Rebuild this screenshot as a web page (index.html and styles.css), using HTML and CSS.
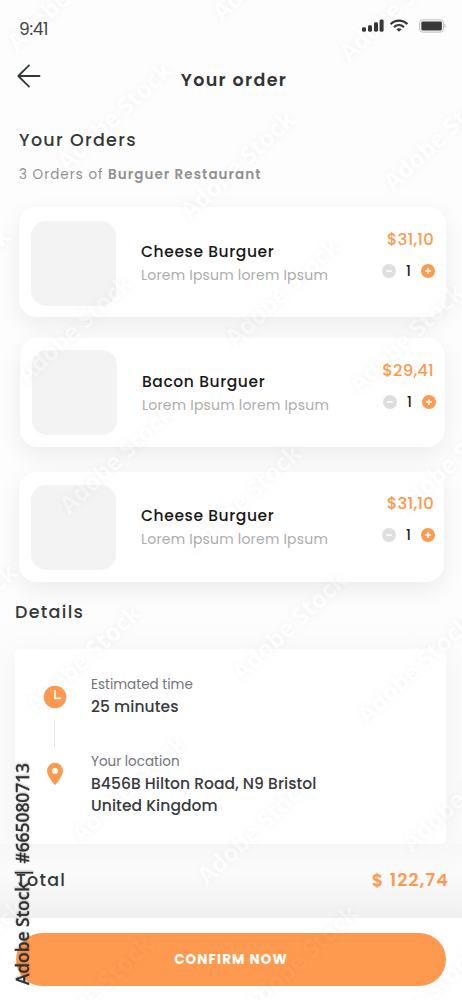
FILE: index.html
```html
<!DOCTYPE html>
<html lang="en">
<head>
<meta charset="utf-8">
<title>Your order</title>
<link rel="stylesheet" href="styles.css">
</head>
<body>
<main class="screen">
  <div class="status">
    <span class="clock">9:41</span>
    <div class="status-icons">
      <svg class="signal" width="22" height="13" viewBox="0 0 22 13"><rect x="0" y="8.3" width="4" height="4.4" rx="1.4"/><rect x="6" y="6.2" width="4" height="6.5" rx="1.4"/><rect x="12" y="3.2" width="4" height="9.5" rx="1.4"/><rect x="17.6" y="0.6" width="4" height="12.1" rx="1.4"/></svg>
      <svg class="wifi" width="20" height="13" viewBox="0 0 20 13"><path d="M1.6 5.1C6.4.4 13.6.4 18.4 5.1M5 8.2c2.9-2.7 7.1-2.7 10 0" fill="none" stroke="#383838" stroke-width="2.2"/><path d="M7.4 10.2c1.5-1.2 3.7-1.2 5.2 0L10 12.8z" fill="#383838"/></svg>
      <svg class="battery" width="28" height="14" viewBox="0 0 28 14"><rect x=".7" y=".9" width="23.8" height="12.2" rx="3" fill="none" stroke="#bbb"/><rect x="2.3" y="2.6" width="20.6" height="8.8" rx="1.4" fill="#383838"/><path d="M25.6 5c1.5.6 1.5 3.6 0 4.2z" fill="#bbb"/></svg>
    </div>
  </div>
  <header class="topbar">
    <svg class="back" width="24" height="24" viewBox="0 0 24 24"><path d="M22.5 12H1.5M12 1.3 1.3 12 12 22.7" fill="none" stroke="#333938" stroke-width="1.8" stroke-linecap="round" stroke-linejoin="round"/></svg>
    <h1>Your order</h1>
  </header>
  <h2 class="orders-title">Your Orders</h2>
  <p class="subtitle">3 Orders of <b>Burguer Restaurant</b></p>

  <section class="orders">
    <article class="card">
      <div class="thumb"></div>
      <div class="info"><h3>Cheese Burguer</h3><p>Lorem Ipsum lorem Ipsum</p></div>
      <div class="side"><span class="price">$31,10</span>
        <div class="stepper"><svg width="14" height="14" viewBox="0 0 14 14"><circle cx="7" cy="7" r="7" fill="#dedede"/><path d="M4.2 7h5.6" stroke="#fff" stroke-width="1.5"/></svg><span>1</span><svg width="14" height="14" viewBox="0 0 14 14"><circle cx="7" cy="7" r="7" fill="#fe9a50"/><path d="M4 7h6M7 4v6" stroke="#fff" stroke-width="1.5"/></svg></div>
      </div>
    </article>
    <article class="card second">
      <div class="thumb"></div>
      <div class="info"><h3>Bacon Burguer</h3><p>Lorem Ipsum lorem Ipsum</p></div>
      <div class="side"><span class="price">$29,41</span>
        <div class="stepper"><svg width="14" height="14" viewBox="0 0 14 14"><circle cx="7" cy="7" r="7" fill="#dedede"/><path d="M4.2 7h5.6" stroke="#fff" stroke-width="1.5"/></svg><span>1</span><svg width="14" height="14" viewBox="0 0 14 14"><circle cx="7" cy="7" r="7" fill="#fe9a50"/><path d="M4 7h6M7 4v6" stroke="#fff" stroke-width="1.5"/></svg></div>
      </div>
    </article>
    <article class="card third">
      <div class="thumb"></div>
      <div class="info"><h3>Cheese Burguer</h3><p>Lorem Ipsum lorem Ipsum</p></div>
      <div class="side"><span class="price">$31,10</span>
        <div class="stepper"><svg width="14" height="14" viewBox="0 0 14 14"><circle cx="7" cy="7" r="7" fill="#dedede"/><path d="M4.2 7h5.6" stroke="#fff" stroke-width="1.5"/></svg><span>1</span><svg width="14" height="14" viewBox="0 0 14 14"><circle cx="7" cy="7" r="7" fill="#fe9a50"/><path d="M4 7h6M7 4v6" stroke="#fff" stroke-width="1.5"/></svg></div>
      </div>
    </article>
  </section>

  <h2 class="details-title">Details</h2>
  <section class="details">
    <div class="rail">
      <svg width="24" height="24" viewBox="0 0 24 24"><circle cx="12" cy="12" r="11.3" fill="#fe9a50"/><path d="M12 5v8.3h6" fill="none" stroke="#fff" stroke-width="1.7"/></svg>
      <i class="line"></i>
      <svg width="18" height="24" viewBox="0 0 18 24"><path fill="#fe9a50" fill-rule="evenodd" d="M9 .8A8 8 0 0 0 1 8.800C1 14.500 9 23.300 9 23.300S17 14.500 17 8.800A8 8 0 0 0 9 .8zm0 5.200a2.900 2.900 0 1 1 0 5.800a2.900 2.900 0 0 1 0-5.800z"/></svg>
    </div>
    <div class="facts">
      <p class="label">Estimated time</p>
      <p class="value minutes">25 minutes</p>
      <p class="label loc">Your location</p>
      <p class="value">B456B Hilton Road, N9 Bristol</p>
      <p class="value">United Kingdom</p>
    </div>
  </section>
  <div class="total"><span>Total</span><strong>$ 122,74</strong></div>
  <footer class="bottom"><button class="confirm">CONFIRM NOW</button></footer>
</main>
<svg class="marks" width="462" height="1000" viewBox="0 0 462 1000">
  <defs>
    <text id="m" textLength="146" transform="rotate(-43)">Adobe Stock</text>
    <g id="tiles">
      <use href="#m" transform="translate(17 52)"/><use href="#m" transform="translate(67 172)"/><use href="#m" transform="translate(222 22)"/><use href="#m" transform="translate(349 63)"/>
      <use href="#m" transform="translate(190 221)"/><use href="#m" transform="translate(393 192)"/><use href="#m" transform="translate(-95 338)"/><use href="#m" transform="translate(27 385)"/>
      <use href="#m" transform="translate(235 348)"/><use href="#m" transform="translate(359 394)"/><use href="#m" transform="translate(69 515)"/><use href="#m" transform="translate(196 555)"/>
      <use href="#m" transform="translate(404 518)"/><use href="#m" transform="translate(-88 674)"/><use href="#m" transform="translate(36 715)"/><use href="#m" transform="translate(242 682)"/>
      <use href="#m" transform="translate(367 725)"/><use href="#m" transform="translate(81 844)"/><use href="#m" transform="translate(207 886)"/><use href="#m" transform="translate(412 853)"/>
      <use href="#m" transform="translate(-80 1010)"/><use href="#m" transform="translate(48 1046)"/><use href="#m" transform="translate(253 1015)"/><use href="#m" transform="translate(375 1056)"/>
    </g>
  </defs>
  <use class="tiles halo" href="#tiles"/>
</svg>
<svg class="marks lighten" width="462" height="1000" viewBox="0 0 462 1000"><use class="tiles letters" href="#tiles"/></svg>
<svg class="marks" width="462" height="1000" viewBox="0 0 462 1000">
  <text class="stock-id" transform="translate(29 985) rotate(-90)" textLength="222" lengthAdjust="spacingAndGlyphs">Adobe Stock | #665080713</text>
</svg>
</body>
</html>
```
FILE: styles.css
```css
* { box-sizing: border-box; }
body { margin: 0; font-family: Poppins, Inter, sans-serif; font-feature-settings: "cv11"; background: #fdfdfd; }
h1, h2, h3, p { margin: 0; font-weight: 500; white-space: nowrap; }
.screen { width: 462px; height: 1000px; overflow: hidden; display: flex; flex-direction: column; background: linear-gradient(#fdfdfd 0 600px, #fbfbfb 700px); }

.status { height: 56px; flex: none; padding: 0 15px 0 19px; display: flex; justify-content: space-between; align-items: flex-start; }
.clock { margin-top: 19px; font-size: 17px; line-height: 20px; color: #444; letter-spacing: -.3px; }
.status-icons { display: flex; margin-top: 19px; fill: #383838; }
.wifi { margin-left: 5px; }
.battery { margin-left: 10px; }

.topbar { height: 64px; flex: none; padding: 8px 14px 0 17px; display: grid; grid-template-columns: 24px 1fr 21px; align-items: start; }
.topbar h1 { margin-top: 4px; text-align: center; font-size: 17.5px; line-height: 24px; font-weight: 600; color: #333; letter-spacing: 1.35px; }
.orders-title { margin: 8px 0 0 19px; font-size: 17.5px; line-height: 24px; color: #333938; letter-spacing: 1.3px; }
.subtitle { margin: 13px 0 0 19px; font-size: 13.5px; line-height: 20px; font-weight: 400; color: #929090; letter-spacing: 1px; }
.subtitle b { font-weight: 600; letter-spacing: 1.05px; }

.orders { flex: none; margin-top: 22px; padding: 0 16px 0 19px; display: flex; flex-direction: column; }
.card { width: 427px; height: 110px; padding: 14px 11px 0 12px; border-radius: 18px; background: #fff; display: flex; align-items: flex-start; box-shadow: 0 8px 25px rgba(0,0,0,.07); }
.card.second { width: 425px; height: 109px; margin: 21px 0 0 1px; padding: 12px 9px 0 12px; }
.card.third { width: 425px; margin-top: 25px; padding: 13px 9px 0 12px; border-top-right-radius: 4px; }
.thumb { width: 85px; height: 85px; flex: none; border-radius: 15px; background: #f3f3f3; }
.info { margin: 20px 0 0 25px; flex: 1; }
.second .info { margin-top: 21px; }
.info h3 { font-size: 15.5px; line-height: 22px; color: #181818; letter-spacing: .6px; }
.info p { margin-top: 1px; font-size: 14px; line-height: 23px; font-weight: 400; color: #adadad; letter-spacing: .2px; }
.side { display: flex; flex-direction: column; align-items: flex-end; margin-top: 8px; }
.price { margin-right: 1px; font-size: 16.5px; line-height: 22px; font-weight: 500; color: #fe9a50; letter-spacing: .15px; }
.second .price { margin-right: 2px; }
.stepper { display: flex; align-items: center; justify-content: space-between; width: 53px; margin-top: 13px; height: 14px; }
.stepper span { font-size: 14px; line-height: 14px; font-weight: 500; color: #181818; }
.second .side { margin-top: 10px; }

.details-title { margin: 18px 0 0 15px; font-size: 17.5px; line-height: 24px; color: #333938; letter-spacing: 1.3px; }
.details { flex: none; width: 431px; height: 195px; margin: 25px 0 0 15px; padding: 0 28px; display: flex; gap: 24px; background: #fff; border-radius: 5px; box-shadow: 0 4px 30px rgba(0,0,0,.045); }
.rail { width: 24px; padding-top: 36px; display: flex; flex-direction: column; align-items: center; }
.line { width: 1px; height: 29px; margin: 11px 1px 13px 0; background: #e4e4e4; }
.facts { padding-top: 26px; }
.label { font-size: 13.5px; line-height: 20px; font-weight: 400; color: #74737b; }
.value { font-size: 15.5px; line-height: 22px; color: #393a40; letter-spacing: .07px; }
.minutes { margin: 1px 0 34px; }
.loc { margin-bottom: 1px; }

.total { flex: none; height: 74px; padding: 24px 13px 0 16px; display: flex; justify-content: space-between; font-size: 17.5px; line-height: 24px; font-weight: 500; color: #333938; letter-spacing: 1.2px; background: linear-gradient(rgba(247,247,247,.9), rgba(251,251,251,.9) 38%, #f0f0f0); }
.total strong { font-weight: 600; color: #fe9a50; }
.bottom { flex: none; height: 82px; padding: 15px 16px 0; background: #fff; }
.confirm { width: 430px; height: 53px; padding: 0; border: 0; border-radius: 27px; background: #fe9a50; color: #fff; font: 700 13.5px/53px Poppins, Inter, sans-serif; letter-spacing: 1.1px; }

.marks { position: absolute; inset: 0; pointer-events: none; overflow: hidden; }
.lighten { mix-blend-mode: color-dodge; }
.tiles { font: 700 24px "Noto Sans", sans-serif; }
.halo { fill: rgba(0,0,0,.045); filter: blur(3px); }
.letters { fill: #080808; }
.stock-id { font: 500 18px "Noto Sans", sans-serif; fill: #303030; stroke: #303030; stroke-width: .3px; filter: drop-shadow(1px 0 1px rgba(0,0,0,.25)); }
```
